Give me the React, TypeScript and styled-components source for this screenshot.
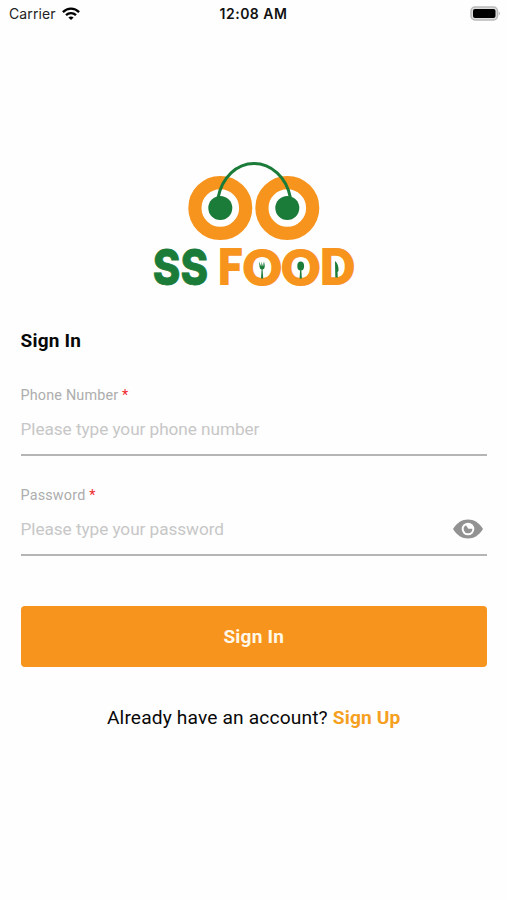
import React, { useState } from "react";
import styled, { createGlobalStyle } from "styled-components";

const Global = createGlobalStyle`
  * { box-sizing: border-box; }
  body { margin: 0; background: #fefefe; }
`;

const Screen = styled.main`
  width: 507px;
  height: 900px;
  overflow: hidden;
  display: flex;
  flex-direction: column;
  font-family: Roboto, sans-serif;
  color: #080808;
`;

const StatusBar = styled.header`
  height: 28px;
  padding: 0 6px 0 9px;
  display: grid;
  grid-template-columns: 1fr auto 1fr;
  align-items: center;
  font-family: Inter, sans-serif;
  font-size: 14px;
  line-height: 28px;
`;

const Carrier = styled.div`
  display: flex;
  align-items: center;
  gap: 6px;
  color: #222;
  letter-spacing: 0.1px;
`;

const Time = styled.time`
  margin-left: -3px;
  font-weight: 600;
  font-size: 14px;
  letter-spacing: 0.5px;
  color: #111;
`;

const BatterySlot = styled.div`
  display: flex;
  justify-content: flex-end;
`;

const LogoSlot = styled.div`
  height: 140px;
  margin-top: 127px;
  display: flex;
  justify-content: center;
  svg { display: block; flex: none; }
`;

const Form = styled.form`
  display: flex;
  flex-direction: column;
  padding: 33px 20px 0 20.5px;
`;

const Title = styled.h1`
  margin: 0 0 33px;
  font-size: 19px;
  line-height: 26px;
  font-weight: 700;
  letter-spacing: 0.2px;
`;

const Field = styled.label`
  display: flex;
  flex-direction: column;
  height: 69px;
  margin-bottom: 31px;
  border-bottom: 2px solid #b5b5b5;
`;

const FieldLabel = styled.span`
  font-size: 14.4px;
  line-height: 18px;
  letter-spacing: 0.17px;
  color: #adadad;
`;

const Required = styled.span`
  color: #f0282d;
`;

const InputRow = styled.span`
  display: flex;
  align-items: center;
  margin-top: 9px;
  height: 30px;
  padding-right: 4px;
`;

const Input = styled.input`
  flex: 1;
  min-width: 0;
  height: 30px;
  padding: 0;
  border: 0;
  outline: 0;
  background: transparent;
  font: 400 17.2px/30px Roboto, sans-serif;
  letter-spacing: -0.05px;
  color: #222;
  &::placeholder { color: #c7c7c7; opacity: 1; }
`;

const IconButton = styled.button`
  display: flex;
  padding: 0;
  border: 0;
  background: none;
`;

const Submit = styled.button`
  height: 61px;
  margin-top: 19px;
  padding: 1px 0 0;
  border: 0;
  border-radius: 4px;
  background: #f7941d;
  color: #fff8e8;
  font: 700 19px/60px Roboto, sans-serif;
  letter-spacing: 0.2px;
`;

const Prompt = styled.p`
  margin: 37px 0 0;
  text-align: center;
  font-size: 19.2px;
  line-height: 28px;
  letter-spacing: 0.14px;
`;

const Link = styled.a`
  color: #f5a01f;
  font-weight: 700;
`;

const ORANGE = "#f7941d";
const GREEN = "#1b7b38";

function Wifi() {
  return (
    <svg width="18" height="14" viewBox="0 0 18 14" fill="none" stroke="#000" strokeWidth="2.3">
      <path d="M.9 5.1C5.5 .5 12.5 .5 17.1 5.1" />
      <path d="M4 8.2c2.9-2.8 7.1-2.8 10 0" />
      <path d="M6.400 10.400Q9 8.400 11.600 10.400L9 13.100Z" fill="#000" stroke="none" />
    </svg>
  );
}

function Battery() {
  return (
    <svg width="31" height="16" viewBox="0 0 31 16">
      <rect x="1" y="1" width="26.500" height="13" rx="4" fill="#ddd" stroke="#b9b9b9" strokeWidth="1.500" />
      <rect x="3" y="3" width="22.500" height="9" rx="2" fill="#000" />
      <path d="M28.800 5.500q2 2 0 4Z" fill="#aaa" />
    </svg>
  );
}

function Eye() {
  return (
    <svg width="30" height="20" viewBox="0 0 30 20">
      <path d="M0 10C4 3.500 9 .5 15 .5S26 3.500 30 10C26 16.500 21 19.500 15 19.500S4 16.500 0 10Z" fill="#929292" />
      <circle cx="15" cy="10" r="6.300" fill="#fff" />
      <path d="M15.300 9.800L13 6.200A4.300 4.300 0 1 0 19.300 9.800Z" fill="#929292" />
    </svg>
  );
}

function Logo() {
  return (
    <svg width="207" height="150" viewBox="150 155 207 150" role="img" aria-label="SS FOOD">
      {[220.3, 287.3].map((x) => (
        <g key={x}>
          <circle cx={x} cy="208" r="25.400" fill="#fff" stroke={ORANGE} strokeWidth="13.200" />
          <circle cx={x} cy="208" r="12" fill={GREEN} />
        </g>
      ))}
      <path d="M218 198C222 177 237 163.500 254 163.500S286.500 177 290.500 198" fill="none" stroke={GREEN} strokeWidth="3" />
      <text x="152.800" y="285" textLength="55.200" lengthAdjust="spacingAndGlyphs" fontFamily="Inter, sans-serif" fontWeight="800" fontSize="49.500" fill={GREEN} stroke={GREEN} strokeWidth="0.8">SS</text>
      <g fontFamily="Lato, sans-serif" fontWeight="900" fontSize="47.500" fill={ORANGE} stroke={ORANGE} strokeWidth="2.2">
        <text x="218" y="284.200" textLength="24" lengthAdjust="spacingAndGlyphs">F</text>
        <text x="262.300" y="284.500" textAnchor="middle">O</text>
        <text x="300.700" y="284.500" textAnchor="middle">O</text>
        <text x="320" y="284.200" textLength="34.500" lengthAdjust="spacingAndGlyphs">D</text>
      </g>
      <g fill={GREEN}>
        <path d="M259 261.500l.6 5.500q.3 2 2 2.500L261 278.500h2.200L262.600 269.500q1.900-.5 2.100-2.500l.3-5.500-1.200 5-.5-5-.8 5-.8-5-.5 5Z" />
        <ellipse cx="300.700" cy="266" rx="3.400" ry="4.500" />
        <path d="M300.200 269h1l.7 9.500h-2.300Z" />
        <path d="M335 261q3.800 3 3.500 10l-1 1 .3 5.500h-2.500Z" />
      </g>
    </svg>
  );
}

export default function App() {
  const [shown, setShown] = useState(false);
  return (
    <>
      <Global />
      <Screen>
        <StatusBar>
          <Carrier>Carrier <Wifi /></Carrier>
          <Time>12:08 AM</Time>
          <BatterySlot><Battery /></BatterySlot>
        </StatusBar>
        <LogoSlot><Logo /></LogoSlot>
        <Form onSubmit={(e) => e.preventDefault()}>
          <Title>Sign In</Title>
          <Field>
            <FieldLabel>Phone Number <Required>*</Required></FieldLabel>
            <InputRow><Input type="tel" placeholder="Please type your phone number" /></InputRow>
          </Field>
          <Field>
            <FieldLabel>Password <Required>*</Required></FieldLabel>
            <InputRow>
              <Input type={shown ? "text" : "password"} placeholder="Please type your password" />
              <IconButton type="button" aria-label="Toggle password" onClick={() => setShown(!shown)}><Eye /></IconButton>
            </InputRow>
          </Field>
          <Submit type="submit">Sign In</Submit>
          <Prompt>Already have an account? <Link>Sign Up</Link></Prompt>
        </Form>
      </Screen>
    </>
  );
}
